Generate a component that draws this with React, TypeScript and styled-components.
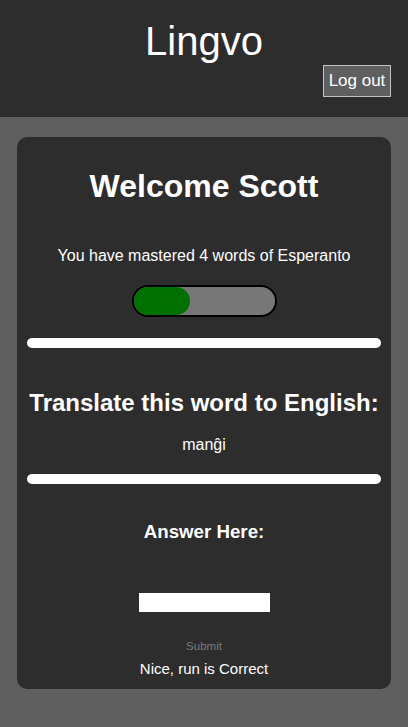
import React from "react";
import styled, { createGlobalStyle } from "styled-components";

const GlobalStyle = createGlobalStyle`
  html, body {
    margin: 0;
    padding: 0;
    background: #5f5f5f;
    font-family: "Liberation Sans", Arial, Helvetica, sans-serif;
    color: #ffffff;
  }
  * { box-sizing: border-box; }
`;

const Page = styled.div`
  min-height: 100vh;
  background: #5f5f5f;
  display: flex;
  flex-direction: column;
`;

const Header = styled.header`
  background: #2d2d2d;
  padding: 18px 17px 20px;
  display: flex;
  flex-direction: column;
`;

const AppTitle = styled.h1`
  margin: 0;
  font-size: 40px;
  line-height: 46px;
  font-weight: 400;
  text-align: center;
`;

const HeaderActions = styled.div`
  display: flex;
  justify-content: flex-end;
  margin-top: 1px;
`;

const LogoutButton = styled.button`
  height: 32px;
  width: 68px;
  padding: 0;
  background: #5f5f5f;
  border: 1px solid #c4c4c4;
  color: #ffffff;
  font-family: inherit;
  font-size: 17px;
  line-height: 20px;
  cursor: pointer;
`;

const Card = styled.main`
  margin: 20px 17px;
  padding: 10px 10px 12px;
  background: #2d2d2d;
  border-radius: 10px;
  display: flex;
  flex-direction: column;
  align-items: center;
  text-align: center;
`;

const Welcome = styled.h2`
  margin: 21px 0 0;
  font-size: 32px;
  line-height: 37px;
  font-weight: 700;
`;

const Mastery = styled.p`
  margin: 42px 0 0;
  font-size: 16px;
  line-height: 18px;
`;

const ProgressTrack = styled.div`
  margin-top: 20px;
  width: 145px;
  height: 32px;
  border: 2px solid #000000;
  border-radius: 16px;
  background: #777777;
  overflow: hidden;
`;

const ProgressFill = styled.div`
  height: 100%;
  background: #007000;
  border-radius: 14px;
`;

const Divider = styled.div<{ $gap: number }>`
  margin-top: ${(p) => p.$gap}px;
  width: 100%;
  height: 10px;
  border-radius: 5px;
  background: #ffffff;
`;

const Prompt = styled.h2`
  margin: 41px 0 0;
  font-size: 24px;
  line-height: 28px;
  font-weight: 700;
`;

const Word = styled.p`
  margin: 19px 0 0;
  font-size: 16px;
  line-height: 18px;
`;

const AnswerForm = styled.form`
  display: flex;
  flex-direction: column;
  align-items: center;
`;

const AnswerLabel = styled.label`
  margin-top: 37px;
  font-size: 18.72px;
  line-height: 22px;
  font-weight: 700;
`;

const AnswerInput = styled.input`
  margin-top: 50px;
  width: 131px;
  height: 19px;
  border: none;
  padding: 0 4px;
  background: #ffffff;
  outline: none;
`;

const SubmitButton = styled.button`
  margin-top: 28px;
  background: transparent;
  border: none;
  padding: 0;
  color: #7a7a7a;
  font-family: inherit;
  font-size: 11.5px;
  line-height: 13px;
  &:disabled {
    color: #7a7a7a;
  }
`;

const Feedback = styled.p`
  margin: 7px 0 0;
  font-size: 15px;
  line-height: 17px;
`;

export default function App() {
  const mastered = 4;
  const total = 10;
  return (
    <Page>
      <GlobalStyle />
      <Header>
        <AppTitle>Lingvo</AppTitle>
        <HeaderActions>
          <LogoutButton type="button">Log out</LogoutButton>
        </HeaderActions>
      </Header>
      <Card>
        <Welcome>Welcome Scott</Welcome>
        <Mastery>You have mastered {mastered} words of Esperanto</Mastery>
        <ProgressTrack>
          <ProgressFill style={{ width: `${(mastered / total) * 100}%` }} />
        </ProgressTrack>
        <Divider $gap={21} />
        <Prompt>Translate this word to English:</Prompt>
        <Word>manĝi</Word>
        <Divider $gap={20} />
        <AnswerForm onSubmit={(e) => e.preventDefault()}>
          <AnswerLabel htmlFor="answer">Answer Here:</AnswerLabel>
          <AnswerInput id="answer" type="text" />
          <SubmitButton type="submit" disabled>
            Submit
          </SubmitButton>
        </AnswerForm>
        <Feedback>Nice, run is Correct</Feedback>
      </Card>
    </Page>
  );
}
